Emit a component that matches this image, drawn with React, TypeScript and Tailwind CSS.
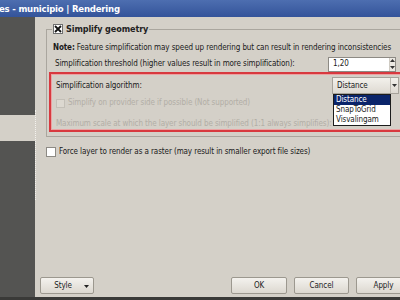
import React from "react";

const font = "font-['DejaVu_Sans_Condensed','DejaVu_Sans',sans-serif]";

function Btn({ children, className = "" }: { children: React.ReactNode; className?: string }) {
  return (
    <div
      className={`h-[17px] flex items-center justify-center rounded-[2px] border border-[#9c988f] bg-gradient-to-b from-[#f4f2ee] to-[#dcd8d0] text-[8px] text-[#222] ${className}`}
    >
      {children}
    </div>
  );
}

export default function App() {
  return (
    <div className={`w-[400px] h-[300px] overflow-hidden flex flex-col bg-[#d4d0c8] ${font} text-[8px] tracking-[-0.1px] text-[#1a1a1a] leading-none`}>
      {/* title bar */}
      <div className="h-[17px] shrink-0 bg-gradient-to-b from-[#4d6eb0] to-[#34549a] flex items-center text-white font-bold text-[9.5px] tracking-[-0.2px] -ml-[1px]">
        es - municipio | Rendering
      </div>
      <div className="flex flex-1 min-h-0">
        {/* left list */}
        <div className="w-[35px] shrink-0 flex flex-col">
          <div className="h-[98px] bg-[#545452]" />
          <div className="h-[26px] bg-[#d4d0c8]" />
          <div className="flex-1 bg-[#545452]" />
        </div>
        <div className="w-[2px] shrink-0 flex flex-col">
          <div className="h-[93px]" />
          <div className="h-[90px] border-l border-dotted border-[#f4f2ee]" />
        </div>
        {/* main */}
        <div className="flex-1 flex flex-col relative">
          <fieldset className="ml-[9px] -mr-[10px] mt-[7px] h-[113px] border border-[#aaa69e] px-[6px]">
            <legend className="ml-[-1px] px-[1px] flex items-center gap-[3px]">
              <span className="w-[10px] h-[10px] bg-white border border-[#6f6f6f] flex items-center justify-center">
                <svg width="8" height="8" viewBox="0 0 8 8">
                  <path d="M1 1L7 7M7 1L1 7" stroke="#111" strokeWidth="1.8" />
                </svg>
              </span>
              <span className="font-bold text-[9px] text-[#222]">Simplify geometry</span>
            </legend>
            <div className="mt-[9px] h-[10px] flex items-center">
              <span className="font-bold">Note:</span>
              <span className="ml-[2px]">Feature simplification may speed up rendering but can result in rendering inconsistencies</span>
            </div>
            <div className="mt-[3px] h-[16px] flex items-center ml-[2px]">
              <span>Simplification threshold (higher values result in more simplification):</span>
              <div className="ml-auto mr-[7px] w-[68px] h-[15px] bg-white border border-[#8d8a84] flex items-center">
                <span className="ml-[4px] flex-1">1,20</span>
                <div className="w-[6px] h-full flex flex-col items-center justify-around border-l border-[#cfcbc3] bg-[#ebe8e2]">
                  <svg width="5" height="3" viewBox="0 0 5 3"><path d="M0 3L2.5 0L5 3Z" fill="#333" /></svg>
                  <svg width="5" height="3" viewBox="0 0 5 3"><path d="M0 0L2.5 3L5 0Z" fill="#333" /></svg>
                </div>
              </div>
            </div>
            <div className="mt-0 -ml-[4px] h-[60px] shrink-0 border-2 border-[#d8393f] shadow-[inset_0_0_0_1px_#eaa3a3] flex flex-col pl-[5px]">
              <div className="mt-[3px] h-[17px] shrink-0 flex items-center">
                <span>Simplification algorithm:</span>
                <div className="ml-auto mr-[2px] w-[67px] h-[17px] border border-[#a7a39b] bg-gradient-to-b from-[#f3f1ec] to-[#dedad2] flex items-center">
                  <span className="ml-[4px] flex-1">Distance</span>
                  <div className="w-[8px] h-full flex items-center justify-center border-l border-[#bdb9b1]">
                    <svg width="5" height="3" viewBox="0 0 5 3"><path d="M0 0L2.5 3L5 0Z" fill="#333" /></svg>
                  </div>
                </div>
              </div>
              <div className="mt-[1px] h-[16px] shrink-0 flex items-center text-[#b2aea6]">
                <span className="w-[9px] h-[9px] border border-[#c3bfb7] bg-[#dcd8d0] mr-[3px]" />
                <span>Simplify on provider side if possible (Not supported)</span>
              </div>
              <div className="mt-[5px] h-[16px] shrink-0 flex items-center text-[#b2aea6]">
                <span>Maximum scale at which the layer should be simplified (1:1 always simplifies):</span>
              </div>
            </div>
          </fieldset>
          <div className="ml-[9px] mt-[9px] h-[12px] flex items-center">
            <span className="w-[10px] h-[10px] bg-white border border-[#8d8a84] mr-[3px]" />
            <span className="text-[#1a1a1a]">Force layer to render as a raster (may result in smaller export file sizes)</span>
          </div>
          <div className="mt-auto mb-[3px] flex items-center">
            <Btn className="ml-[3px] w-[54px] relative">
              <span className="ml-[-8px]">Style</span>
              <svg className="absolute right-[4px] top-[7px]" width="5" height="3" viewBox="0 0 5 3"><path d="M0 0L2.5 3L5 0Z" fill="#222" /></svg>
            </Btn>
            <Btn className="ml-auto w-[56px]">OK</Btn>
            <Btn className="ml-[7px] w-[55px]">Cancel</Btn>
            <Btn className="ml-[7px] w-[55px] -mr-[11px]">Apply</Btn>
          </div>
          {/* dropdown list overlay */}
          <div className="absolute left-[296px] top-[77px] w-[58px] bg-white border border-[#1c1c1c] flex flex-col leading-[10px]">
            <div className="h-[10px] bg-[#0a246a] text-white pl-[2px]">Distance</div>
            <div className="h-[10px] pl-[2px]">SnapToGrid</div>
            <div className="h-[10px] pl-[2px]">Visvalingam</div>
          </div>
        </div>
      </div>
      <div className="h-[3px] shrink-0 bg-[#3a3a38]" />
    </div>
  );
}
